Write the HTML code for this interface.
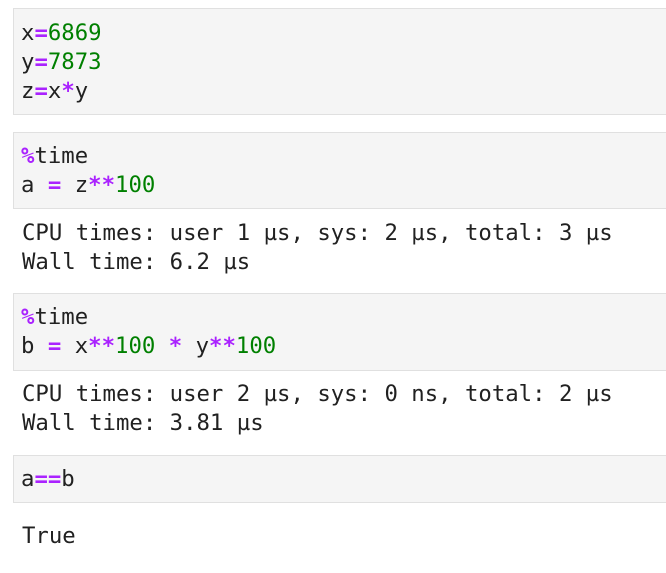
<!DOCTYPE html>
<html><head><meta charset="utf-8"><style>
body{margin:0;background:#fff;width:666px;height:573px;overflow:hidden;position:relative;font-family:"DejaVu Sans Mono","Liberation Mono",monospace;font-size:22.3px;color:#212121}
.c{position:absolute;left:13px;width:660px;background:#f5f5f5;border:1px solid #e0e0e0;box-sizing:border-box}
.t{position:absolute;left:21px;line-height:29px;white-space:pre}
.o{color:#aa22ff;font-weight:bold}
.n{color:#008000}
</style></head><body>
<div class="c" style="top:8px;height:107px"></div>
<div class="t" style="top:18.5px">x<span class="o">=</span><span class="n">6869</span>
y<span class="o">=</span><span class="n">7873</span>
z<span class="o">=</span>x<span class="o">*</span>y</div>
<div class="c" style="top:132px;height:77px"></div>
<div class="t" style="top:141.5px"><span class="o">%</span>time
a <span class="o">=</span> z<span class="o">**</span><span class="n">100</span></div>
<div class="t" style="top:218.5px;left:22px">CPU times: user 1 µs, sys: 2 µs, total: 3 µs
Wall time: 6.2 µs</div>
<div class="c" style="top:293px;height:78px"></div>
<div class="t" style="top:303px"><span class="o">%</span>time
b <span class="o">=</span> x<span class="o">**</span><span class="n">100</span> <span class="o">*</span> y<span class="o">**</span><span class="n">100</span></div>
<div class="t" style="top:379.5px;left:22px">CPU times: user 2 µs, sys: 0 ns, total: 2 µs
Wall time: 3.81 µs</div>
<div class="c" style="top:455px;height:48px"></div>
<div class="t" style="top:465px">a<span class="o">==</span>b</div>
<div class="t" style="top:521.5px;left:22px">True</div>
</body></html>
